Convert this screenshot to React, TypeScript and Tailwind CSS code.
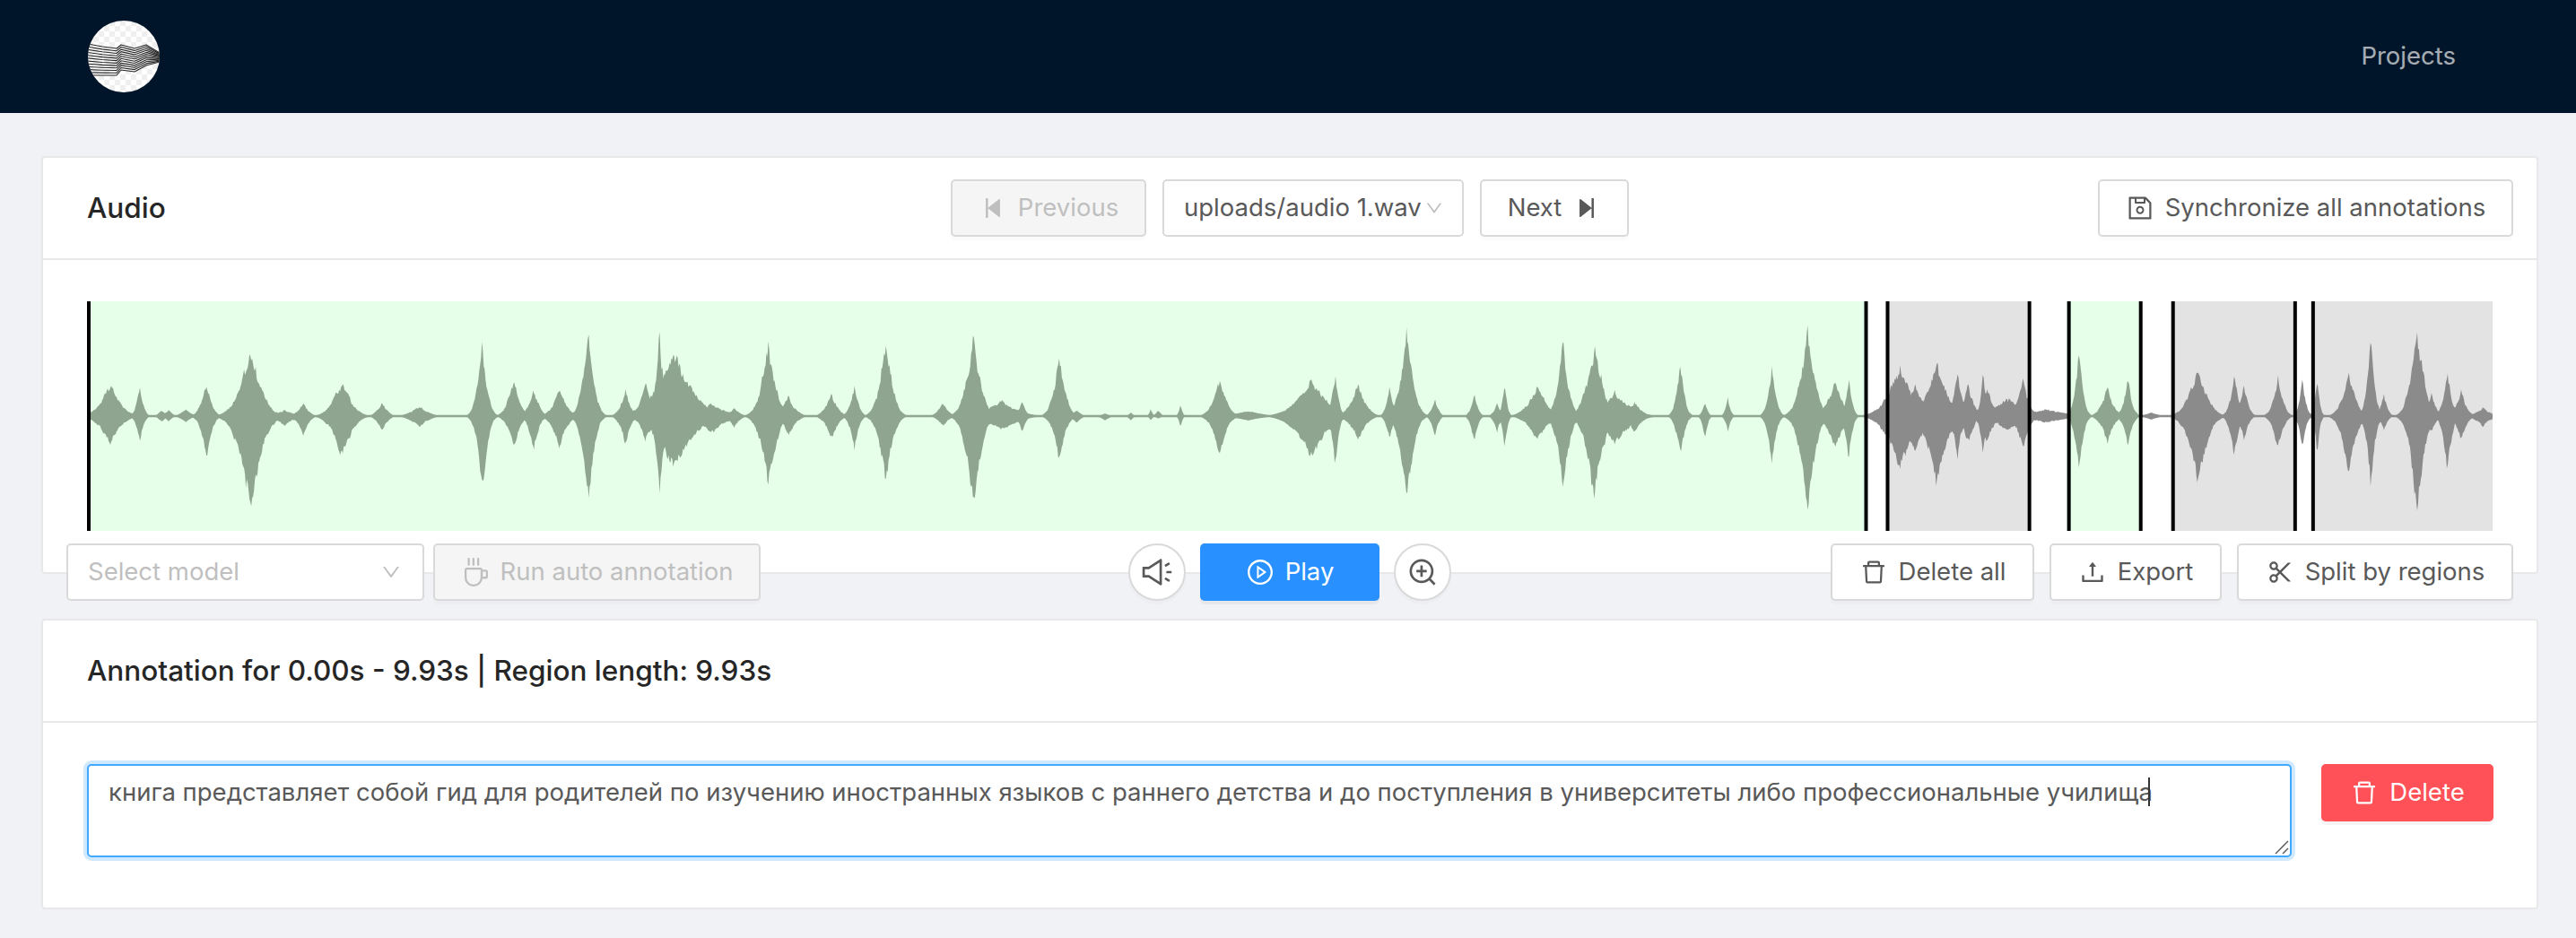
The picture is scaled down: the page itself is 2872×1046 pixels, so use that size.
import React, { useEffect, useRef } from 'react';
import {
  AiOutlineCoffee,
  AiOutlineDelete,
  AiOutlineDown,
  AiOutlinePlayCircle,
  AiOutlineSave,
  AiOutlineScissor,
  AiOutlineSound,
  AiOutlineStepBackward,
  AiOutlineStepForward,
  AiOutlineUpload,
  AiOutlineZoomIn,
} from 'react-icons/ai';

const TRANSCRIPT =
  'книга представляет собой гид для родителей по изучению иностранных языков с раннего детства и до поступления в университеты либо профессиональные училища';

// [position, up, down, width] read off the reference, one table per crop
const BURSTS_A = [
  [100, 37, 32, 12], [152, 37, 33, 4], [190, 7, 7, 4], [202, 8, 6, 4], [232, 8, 7, 6], [268, 42, 50, 6], [345, 83, 114, 13],
  [405, 7, 12, 10], [437, 17, 23, 6], [505, 43, 50, 11], [575, 17, 17, 6], [640, 12, 13, 10], [750, 87, 87, 6], [805, 46, 37, 7],
  [840, 33, 38, 6], [885, 32, 37, 8], [935, 100, 100, 7], [1000, 30, 32, 6], [1035, 45, 30, 6], [1060, 97, 90, 5], [1085, 75, 62, 22],
  [1150, 15, 20, 16], [1190, 10, 13, 6], [1250, 85, 82, 9], [1285, 23, 23, 8], [1360, 28, 28, 7], [1400, 36, 37, 5], [1455, 90, 77, 8], [1555, 15, 12, 6],
];
const BURSTS_B = [
  [40, 90, 102, 9], [90, 18, 17, 18], [125, 18, 20, 4], [190, 75, 50, 7], [220, 7, 8, 5], [270, 3, 5, 5], [315, 4, 5, 3], [350, 8, 5, 2],
  [363, 7, 3, 3], [402, 15, 13, 2], [470, 46, 45, 8], [520, 6, 5, 16], [630, 43, 47, 18], [672, 53, 58, 4], [712, 37, 28, 9], [767, 35, 28, 4],
  [797, 97, 97, 8], [846, 22, 23, 4], [915, 28, 33, 4], [955, 15, 18, 4], [968, 37, 38, 3], [1025, 38, 30, 11], [1070, 83, 87, 7], [1125, 85, 97, 10],
  [1160, 28, 33, 18], [1195, 17, 20, 8], [1275, 58, 47, 5], [1318, 18, 28, 3], [1358, 21, 18, 3], [1435, 55, 53, 5], [1497, 105, 110, 9], [1545, 42, 38, 9],
];
const BURSTS_C = [
  [75, 42, 53, 4], [180, 60, 63, 15], [210, 37, 43, 12], [255, 65, 78, 12], [298, 54, 47, 5], [320, 38, 33, 6], [350, 50, 53, 3], [358, 33, 30, 8],
  [400, 22, 17, 16], [432, 43, 40, 7], [480, 8, 8, 22], [547, 72, 67, 5], [605, 35, 32, 7], [647, 43, 37, 5], [695, 4, 4, 8], [790, 60, 77, 11],
  [865, 48, 48, 5], [885, 37, 27, 5], [955, 45, 40, 6], [1005, 43, 37, 4], [1035, 47, 43, 3], [1100, 53, 70, 8], [1145, 90, 83, 5], [1172, 27, 17, 4],
  [1240, 115, 117, 8], [1270, 27, 20, 5], [1302, 55, 70, 5], [1330, 32, 30, 6], [1375, 10, 13, 8],
];

const WAVE_WIDTH = 2680;
const WAVE_MID = 128;

const bursts = [
  ...BURSTS_A.map(([p, u, d, w]) => [60 + p / 1.568 - 98, u, d, w]),
  ...BURSTS_B.map(([p, u, d, w]) => [1060 + p / 1.568 - 98, u, d, w]),
  ...BURSTS_C.map(([p, u, d, w]) => [2020 + p / 1.84 - 98, u, d, w]),
];

const noise = (x: number) => {
  const v = Math.sin(x * 12.9898) * 43758.5453;
  return v - Math.floor(v);
};

// slow wobble plus per-pixel grain, so the outline is jagged rather than bell shaped
const grain = (x: number) => {
  const i = Math.floor(x / 3);
  const t = x / 3 - i;
  const slow = noise(i) * (1 - t) + noise(i + 1) * t;
  return 0.68 + slow * 0.18 + noise(x + 0.5) * 0.16;
};

const envelope = (x: number, side: 1 | 2) => {
  let peak = 1.2;
  for (const b of bursts) {
    const d = Math.abs(x - b[0]) / b[3];
    if (d < 8) {
      const shape = 0.62 * Math.exp(-Math.pow(d / 1.35, 1.8)) + 0.38 * Math.exp(-d * 2.4);
      peak = Math.max(peak, b[side] * shape);
    }
  }
  return Math.max(1.2, peak * (peak > 5 ? grain(x + side * 11) * 1.08 : 1));
};

const buildWave = () => {
  const top: string[] = [];
  const bottom: string[] = [];
  for (let x = 0; x <= WAVE_WIDTH; x += 1) {
    top.push(`${x},${(WAVE_MID - envelope(x, 1)).toFixed(1)}`);
    bottom.unshift(`${x},${(WAVE_MID + envelope(x, 2)).toFixed(1)}`);
  }
  return `M${top.join('L')}L${bottom.join('L')}Z`;
};

const wavePath = buildWave();

const greenRegions = [[0, 1980], [2206, 2286]];
const grayRegions = [[2004, 2162], [2322, 2458], [2478, 2680]];
const markers = [0, 1980, 2004, 2162, 2206, 2286, 2322, 2458, 2478];

const Waveform = () => (
  <svg viewBox={`0 0 ${WAVE_WIDTH} 256`} preserveAspectRatio="none" className="block w-full h-[256px]">
    <defs>
      <linearGradient id="waveFill" gradientUnits="userSpaceOnUse" x1="0" y1="0" x2={WAVE_WIDTH} y2="0">
        <stop offset="0" stopColor="#8fa590" />
        <stop offset={1980 / WAVE_WIDTH} stopColor="#8fa590" />
        <stop offset={1980 / WAVE_WIDTH} stopColor="#8b8b8b" />
        <stop offset={2206 / WAVE_WIDTH} stopColor="#8b8b8b" />
        <stop offset={2206 / WAVE_WIDTH} stopColor="#8fa590" />
        <stop offset={2286 / WAVE_WIDTH} stopColor="#8fa590" />
        <stop offset={2286 / WAVE_WIDTH} stopColor="#8b8b8b" />
        <stop offset="1" stopColor="#8b8b8b" />
      </linearGradient>
    </defs>
    {greenRegions.map(([a, b]) => (
      <rect key={a} x={a} y="0" width={b - a} height="256" fill="#e6ffe9" />
    ))}
    {grayRegions.map(([a, b]) => (
      <rect key={a} x={a} y="0" width={b - a} height="256" fill="#e3e3e3" />
    ))}
    <path d={wavePath} fill="url(#waveFill)" />
    {markers.map((x) => (
      <rect key={x} x={x} y="0" width="4" height="256" fill="#000" />
    ))}
  </svg>
);

// mesh lines between the top and bottom outline of the logo wave
const logoTop = [[0, 26], [16, 29], [32, 31], [37, 27], [52, 31], [65, 27], [80, 36]];
const logoBottom = [[0, 61], [11, 61], [22, 61], [30, 55], [50, 57], [62, 50], [80, 46]];

const logoLines = Array.from({ length: 12 }, (_, i) => {
  const t = i / 11;
  const pts = logoTop.map((p, j) => {
    const q = logoBottom[j];
    return `${p[0]},${(p[1] + (q[1] - p[1]) * t).toFixed(1)}`;
  });
  return `M${pts.join('L')}`;
});

const Logo = () => (
  <svg viewBox="0 0 80 80" className="block w-[80px] h-[80px] shrink-0">
    <defs>
      <pattern id="checker" width="12" height="12" patternUnits="userSpaceOnUse">
        <rect width="12" height="12" fill="#ffffff" />
        <rect width="6" height="6" fill="#efefef" />
        <rect x="6" y="6" width="6" height="6" fill="#efefef" />
      </pattern>
      <clipPath id="logoClip">
        <circle cx="40" cy="40" r="40" />
      </clipPath>
    </defs>
    <g clipPath="url(#logoClip)">
      <rect width="80" height="80" fill="url(#checker)" />
      {logoLines.map((d) => (
        <path key={d} d={d} fill="none" stroke="#262626" strokeWidth="1.1" strokeLinejoin="round" />
      ))}
    </g>
  </svg>
);

type BtnProps = {
  icon?: React.ReactNode;
  children?: React.ReactNode;
  className?: string;
  disabled?: boolean;
};

const Btn = ({ icon, children, className = '', disabled }: BtnProps) => (
  <button
    type="button"
    disabled={disabled}
    className={`h-[64px] flex items-center justify-center gap-[12px] rounded-[5px] border-2 text-[27.5px] leading-none shrink-0 shadow-[0_4px_0_rgba(0,0,0,0.015)] ${
      disabled ? 'bg-[#f5f5f5] border-[#d9d9d9] text-[#bfbfbf]' : 'bg-white border-[#d9d9d9] text-[#595959]'
    } ${className}`}
  >
    {icon}
    {children}
  </button>
);

const CircleBtn = ({ children }: { children: React.ReactNode }) => (
  <button
    type="button"
    className="w-[64px] h-[64px] flex items-center justify-center rounded-full border-2 border-[#d9d9d9] bg-white text-[#595959] shrink-0 shadow-[0_4px_0_rgba(0,0,0,0.015)]"
  >
    {children}
  </button>
);

const App = () => {
  const noteRef = useRef<HTMLTextAreaElement>(null);

  useEffect(() => {
    const el = noteRef.current;
    if (!el) return;
    el.focus();
    el.setSelectionRange(TRANSCRIPT.length, TRANSCRIPT.length);
  }, []);

  return (
    <div className="min-h-screen bg-[#f0f2f5] font-['Inter','Noto_Sans',sans-serif]">
      <header className="h-[126px] bg-[#001529] flex items-center justify-between pl-[98px] pr-[134px]">
        <Logo />
        <span className="text-[27.5px] text-white/65">Projects</span>
      </header>

      <main className="pl-[46px] pr-[42px] pt-[48px] flex flex-col gap-[50px]">
        {/* Audio */}
        <section className="bg-white border-2 border-[#e8e8e8] rounded-[4px]">
          <div className="h-[112px] px-[26px] grid grid-cols-[1fr_auto_1fr] items-center border-b-2 border-[#e8e8e8] box-content">
            <h2 className="ml-[23px] text-[31.5px] font-medium text-[#262626]">Audio</h2>
            <div className="flex items-center gap-[18px]">
              <Btn disabled className="w-[218px]" icon={<AiOutlineStepBackward size={32} />}>
                Previous
              </Btn>
              <div className="w-[336px] h-[64px] flex items-center justify-between pl-[22px] pr-[20px] bg-white border-2 border-[#d9d9d9] rounded-[5px] text-[27.5px] text-[#595959]">
                <span>uploads/audio 1.wav</span>
                <AiOutlineDown size={22} className="text-[#bfbfbf]" />
              </div>
              <Btn className="w-[166px]" icon={null}>
                Next
                <AiOutlineStepForward size={32} />
              </Btn>
            </div>
            <div className="flex justify-end">
              <Btn className="w-[463px]" icon={<AiOutlineSave size={32} />}>
                Synchronize all annotations
              </Btn>
            </div>
          </div>

          <div className="px-[49px] pt-[46px]">
            <Waveform />
            <div className="relative z-10 -mx-[23px] mt-[14px] -mb-[32px] grid grid-cols-[1fr_auto_1fr] items-center">
              <div className="flex items-center gap-[10px]">
                <div className="w-[399px] h-[64px] flex items-center justify-between pl-[22px] pr-[23px] bg-white border-2 border-[#d9d9d9] rounded-[5px] text-[27.5px] text-[#bfbfbf]">
                  <span>Select model</span>
                  <AiOutlineDown size={24} />
                </div>
                <Btn disabled className="w-[365px]" icon={<AiOutlineCoffee size={32} />}>
                  Run auto annotation
                </Btn>
              </div>
              <div className="flex items-center gap-[16px]">
                <CircleBtn>
                  <AiOutlineSound size={38} />
                </CircleBtn>
                <button
                  type="button"
                  className="w-[200px] h-[64px] flex items-center justify-center gap-[12px] rounded-[5px] bg-[#2891ff] text-white text-[27.5px] shadow-[0_4px_0_rgba(0,0,0,0.045)]"
                >
                  <AiOutlinePlayCircle size={32} />
                  Play
                </button>
                <CircleBtn>
                  <AiOutlineZoomIn size={36} />
                </CircleBtn>
              </div>
              <div className="flex items-center justify-end gap-[17px]">
                <Btn className="w-[227px]" icon={<AiOutlineDelete size={32} />}>
                  Delete all
                </Btn>
                <Btn className="w-[192px]" icon={<AiOutlineUpload size={32} />}>
                  Export
                </Btn>
                <Btn className="w-[308px]" icon={<AiOutlineScissor size={32} />}>
                  Split by regions
                </Btn>
              </div>
            </div>
          </div>
        </section>

        {/* Annotation */}
        <section className="bg-white border-2 border-[#e8e8e8] rounded-[4px]">
          <div className="h-[112px] pl-[49px] flex items-center border-b-2 border-[#e8e8e8] box-content">
            <h2 className="text-[31.5px] font-medium text-[#262626]">Annotation for 0.00s - 9.93s | Region length: 9.93s</h2>
          </div>
          <div className="pl-[49px] pr-[48px] pt-[46px] pb-[56px] flex items-start gap-[33px]">
            <div className="relative flex-1 h-[104px]">
              <textarea
                ref={noteRef}
                defaultValue={TRANSCRIPT}
                className="block w-full h-full px-[22px] py-[10px] bg-white border-2 border-[#40a9ff] rounded-[5px] text-[27.5px] leading-[38px] text-[#595959] outline-none shadow-[0_0_0_4px_rgba(24,144,255,0.2)] resize-none"
              />
              {/* caret and resize grip stay visible in a still picture */}
              <span className="absolute left-[2298px] top-[15px] w-[2px] h-[32px] bg-[#333]" />
              <svg viewBox="0 0 16 16" className="absolute right-[3px] bottom-[3px] w-[16px] h-[16px]">
                <path d="M1 15L15 1M9 15L15 9" stroke="#555555" strokeWidth="1.4" fill="none" />
              </svg>
            </div>
            <button
              type="button"
              className="w-[192px] h-[64px] flex items-center justify-center gap-[12px] rounded-[5px] bg-[#ff5157] text-white text-[27.5px] shrink-0 shadow-[0_4px_0_rgba(0,0,0,0.045)]"
            >
              <AiOutlineDelete size={32} />
              Delete
            </button>
          </div>
        </section>
      </main>
    </div>
  );
};

export default App;
